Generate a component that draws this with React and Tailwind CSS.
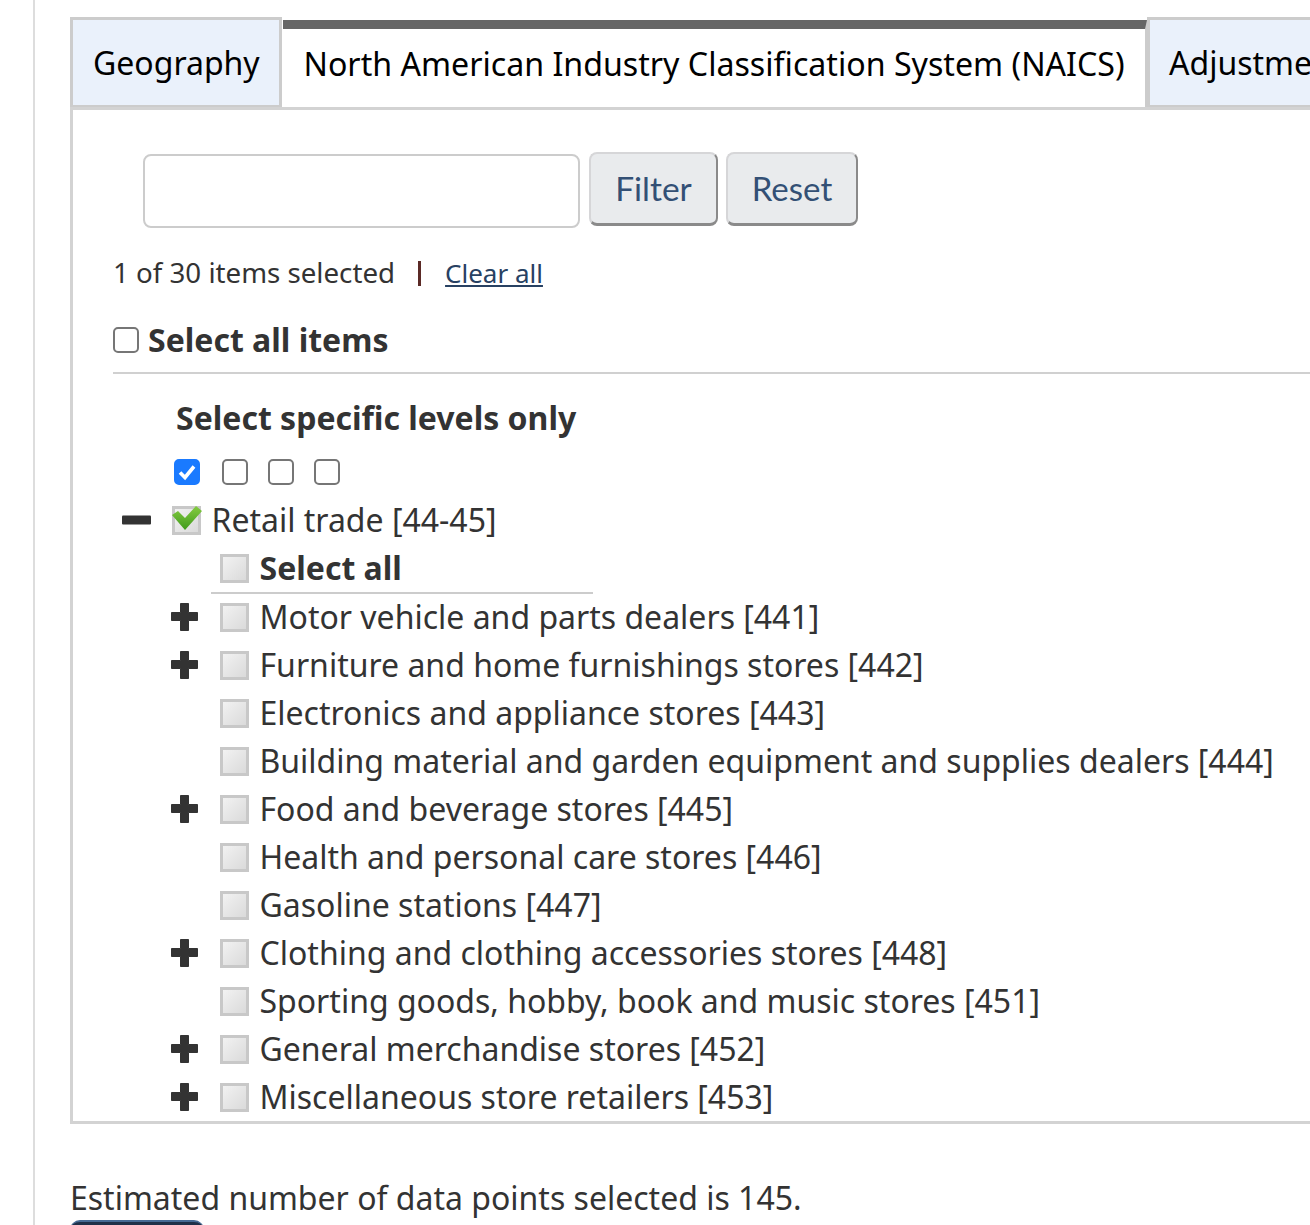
import React from 'react';

const rows = [
  { label: 'Motor vehicle and parts dealers [441]', expand: true },
  { label: 'Furniture and home furnishings stores [442]', expand: true },
  { label: 'Electronics and appliance stores [443]' },
  { label: 'Building material and garden equipment and supplies dealers [444]' },
  { label: 'Food and beverage stores [445]', expand: true },
  { label: 'Health and personal care stores [446]' },
  { label: 'Gasoline stations [447]' },
  { label: 'Clothing and clothing accessories stores [448]', expand: true },
  { label: 'Sporting goods, hobby, book and music stores [451]' },
  { label: 'General merchandise stores [452]', expand: true },
  { label: 'Miscellaneous store retailers [453]', expand: true },
];

function PlusIcon() {
  return (
    <svg width="30" height="30" viewBox="0 0 30 30" className="block blur-[0.4px]">
      <path d="M10.5 1.5h8v9h9v8h-9v10h-8v-10h-9v-8h9z" fill="#333" stroke="#333" strokeWidth="1" strokeLinejoin="round" />
    </svg>
  );
}

function MinusIcon() {
  return (
    <svg width="30" height="10" viewBox="0 0 30 10" className="block blur-[0.4px]">
      <rect x="0" y="0.5" width="29" height="9" rx="1" fill="#333" />
    </svg>
  );
}

function TreeBox({ checked }) {
  return (
    <span className="relative block w-[29px] h-[29px] border-[3px] border-[#c8c8c8] bg-gradient-to-br from-[#f2f2f2] to-[#dadada]">
      {checked && (
        <svg width="34" height="28" viewBox="0 0 34 28" className="absolute left-[-5px] top-[-5px] blur-[0.5px]">
          <defs>
            <linearGradient id="tick" x1="0" y1="0" x2="0" y2="1">
              <stop offset="0" stopColor="#86cc42" />
              <stop offset="1" stopColor="#3f9a1c" />
            </linearGradient>
          </defs>
          <path d="M2 11l6-4 7 7L26 2l6 5-17 19z" fill="url(#tick)" />
        </svg>
      )}
    </span>
  );
}

function LevelBox({ checked, className }) {
  return (
    <span className={`relative block w-[26px] h-[26px] ${className}`}>
      <input
        type="checkbox"
        defaultChecked={checked}
        className="block appearance-none w-[26px] h-[26px] m-0 rounded-[5px] border-2 border-[#767676] bg-white checked:border-[#1a7aff] checked:bg-[#1a7aff]"
      />
      {checked && (
        <svg width="26" height="26" viewBox="0 0 26 26" className="absolute left-0 top-0 pointer-events-none">
          <path d="M6 13.5l5 5 9-11" fill="none" stroke="#fff" strokeWidth="3.6" />
        </svg>
      )}
    </span>
  );
}

export default function App() {
  return (
    <div className="w-[1310px] h-[1225px] overflow-hidden bg-white font-['Noto_Sans',sans-serif] text-[#333]">
      <div className="ml-[33px] h-full border-l-2 border-[#dddddd] pl-[35px] pt-[17px]">
        {/* Tabs */}
        <div className="flex items-start w-[1300px] h-[93px] text-[32px] text-black">
          <div className="w-[212px] h-[91px] shrink-0 border-[3px] border-[#cccccc] bg-[#eaf1fb] pl-[20px] pt-[21px] leading-[44px]">Geography</div>
          <div className="w-[864px] h-[90px] shrink-0 ml-px mt-[3px] border-t-[9px] border-[#666666] bg-white pl-[20.5px] pt-[13px] text-[32.15px] leading-[44px] border-r-[2px] border-r-[#cccccc] whitespace-nowrap">
            North American Industry Classification System (NAICS)
          </div>
          <div className="w-[300px] h-[91px] shrink-0 border-[3px] border-[#cccccc] bg-[#eaf1fb] pl-[19px] pt-[21px] leading-[44px] whitespace-nowrap">Adjustments</div>
        </div>

        {/* Panel */}
        <div className="relative -mt-[3px] w-[1300px] h-[1017px] overflow-hidden border-[3px] border-[#d3d3d3] bg-white">
          <div className="flex items-start pl-[70px] pt-[42px]">
            <input type="text" className="mt-[2px] w-[437px] h-[74px] rounded-lg border-2 border-[#cccccc] bg-white" />
            <button className="ml-[9px] w-[129px] h-[74px] rounded-lg border-2 border-[#d6d6d8] border-b-[3px] border-b-[#8a8a8a] border-r-[#8a8a8a] bg-[#e9ebed] font-['Lato',sans-serif] text-[33.5px] text-[#335075]">Filter</button>
            <button className="ml-[8px] w-[132px] h-[74px] rounded-lg border-2 border-[#d6d6d8] border-b-[3px] border-b-[#8a8a8a] border-r-[#8a8a8a] bg-[#e9ebed] font-['Lato',sans-serif] text-[33px] text-[#335075]">Reset</button>
          </div>

          <div className="flex items-center pl-[40px] mt-[23px] h-[44px] text-[27.7px]">
            <span>1 of 30 items selected</span>
            <span className="ml-[23px] w-[3px] h-[25px] bg-[#5b2a26]" />
            <a href="#" className="ml-[24px] text-[26px] text-[#284162] underline">Clear all</a>
          </div>

          <div className="mt-[23px] ml-[40px] flex items-center h-[44px]">
            <LevelBox />
            <span className="ml-[9px] text-[32px] font-bold">Select all items</span>
          </div>
          <div className="ml-[40px] mt-[10px] h-[2px] bg-[#d0d0d0]" />

          <div className="ml-[103px] mt-[22px] h-[44px] leading-[44px] text-[32px] font-bold">Select specific levels only</div>

          <div className="ml-[101px] mt-[19px] flex items-center h-[26px]">
            <LevelBox checked />
            <LevelBox className="ml-[22px]" />
            <LevelBox className="ml-[20px]" />
            <LevelBox className="ml-[20px]" />
          </div>

          {/* Tree */}
          <div className="mt-[11px] text-[32px] whitespace-nowrap">
            <div className="flex items-center h-12 pl-[49px]">
              <span className="w-[50px] shrink-0"><MinusIcon /></span>
              <TreeBox checked />
              <span className="ml-[10.5px]">Retail trade [44-45]</span>
            </div>
            <div className="relative flex items-center h-12 mb-px pl-[147px]">
              <TreeBox />
              <span className="ml-[10.5px] font-bold">Select all</span>
              <div className="absolute left-[138px] bottom-[-2px] w-[382px] h-[2px] bg-[#cccccc]" />
            </div>
            {rows.map(row => (
              <div key={row.label} className="flex items-center h-12 pl-[97px]">
                <span className="w-[50px] shrink-0">{row.expand && <PlusIcon />}</span>
                <TreeBox />
                <span className="ml-[10.5px]">{row.label}</span>
              </div>
            ))}
          </div>
        </div>

        <p className="mt-[52px] text-[32px] leading-[44px]">Estimated number of data points selected is 145.</p>
        <div className="w-[134px] h-[20px] rounded-t-[10px] bg-[#1f3048] border-t-2 border-[#466a94]" />
      </div>
    </div>
  );
}
